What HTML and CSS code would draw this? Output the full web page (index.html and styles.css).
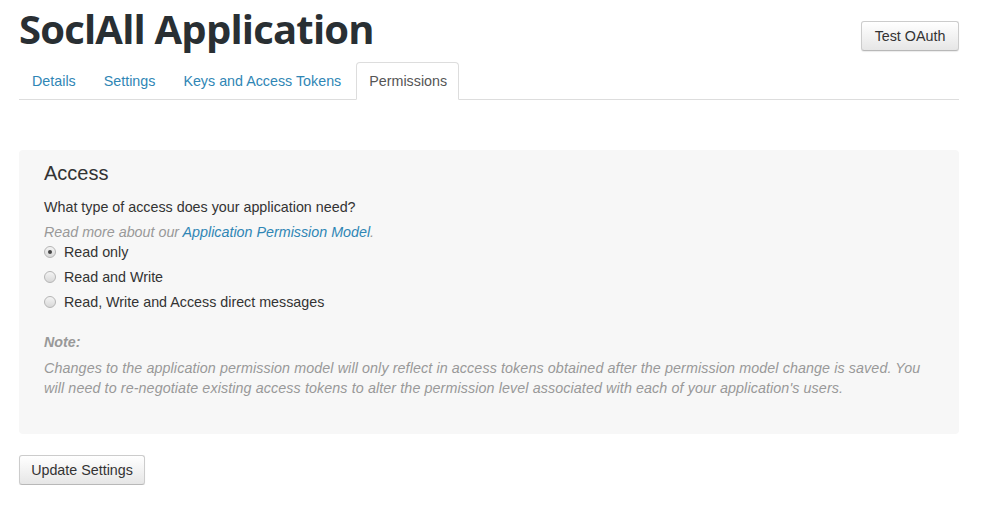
FILE: index.html
```html
<!DOCTYPE html>
<html>
<head>
<meta charset="utf-8">
<link rel="stylesheet" href="styles.css">
</head>
<body>
<div class="page">
  <div class="header">
    <h1 class="title">SoclAll Application</h1>
    <button class="btn btn-oauth">Test OAuth</button>
  </div>
  <ul class="tabs">
    <li class="tab"><a href="#">Details</a></li>
    <li class="tab"><a href="#">Settings</a></li>
    <li class="tab"><a href="#">Keys and Access Tokens</a></li>
    <li class="tab active"><a href="#">Permissions</a></li>
  </ul>
  <div class="panel">
    <h2 class="panel-title">Access</h2>
    <p class="question">What type of access does your application need?</p>
    <p class="more">Read more about our <a href="#">Application Permission Model</a>.</p>
    <label class="radio first"><span class="dot checked"></span>Read only</label>
    <label class="radio"><span class="dot"></span>Read and Write</label>
    <label class="radio"><span class="dot"></span>Read, Write and Access direct messages</label>
    <p class="note-title">Note:</p>
    <p class="note">Changes to the application permission model will only reflect in access tokens obtained after the permission model change is saved. You will need to re-negotiate existing access tokens to alter the permission level associated with each of your application's users.</p>
  </div>
  <button class="btn btn-update">Update Settings</button>
</div>
</body>
</html>
```
FILE: styles.css
```css
* { box-sizing: border-box; }
html, body { margin: 0; padding: 0; background: #fff; }
body { font-family: "Liberation Sans", Arial, sans-serif; font-size: 14.3px; color: #333; }
.page { width: 940px; margin-left: 19px; }
.header { display: flex; justify-content: space-between; align-items: flex-start; height: 62px; }
.title {
  margin: 0; padding-top: 4px;
  font-family: "Open Sans", sans-serif; font-weight: 700; font-size: 40px;
  line-height: 50px; color: #292f33; letter-spacing: -0.8px;
}
.btn {
  font-family: "Liberation Sans", Arial, sans-serif; font-size: 14.3px; color: #333;
  background: linear-gradient(#ffffff, #e6e6e6);
  border: 1px solid #ccc; border-bottom-color: #b8b8b8; border-radius: 3px;
  box-shadow: 0 1px 1px rgba(0,0,0,0.08);
  height: 30px; padding: 0 10px; line-height: 28px; cursor: pointer;
}
.btn-oauth { margin-top: 21px; width: 98px; }
.tabs {
  display: flex; list-style: none; margin: 0; padding: 0;
  border-bottom: 1px solid #ddd; height: 38px;
}
.tab { margin-right: 2px; }
.tab a {
  display: block; padding: 8px 13px; line-height: 20px; height: 38px;
  color: #2f86b5; text-decoration: none; border: 1px solid transparent; border-radius: 4px 4px 0 0;
  border-left: 0; border-right: 0;
}
.tab.active a {
  color: #555; background: #fff; border: 1px solid #ddd; border-bottom-color: #fff;
  padding-left: 12px; padding-right: 11px;
}
.panel {
  margin-top: 50px; background: #f7f7f7; border-radius: 4px;
  padding: 10px 25px 36px; height: 284px;
}
.panel-title { margin: 0 0 11px; font-size: 20px; font-weight: normal; line-height: 26px; color: #333; }
.question { margin: 0; line-height: 20px; }
.more { margin: 5px 0 0; line-height: 20px; font-style: italic; color: #999; }
.more a { color: #2f86b5; text-decoration: none; }
.radio { display: flex; align-items: center; line-height: 20px; margin-top: 5px; }
.radio.first { margin-top: 0; }
.dot {
  width: 12px; height: 12px; border-radius: 50%; margin-right: 8px;
  border: 1px solid #b5b5b5; background: linear-gradient(#f4f4f4, #d8d8d8);
  position: relative; flex: none;
}
.dot.checked::after {
  content: ""; position: absolute; left: 3px; top: 3px; width: 4px; height: 4px;
  border-radius: 50%; background: #444;
}
.note-title { margin: 20px 0 0; font-style: italic; font-weight: bold; color: #999; line-height: 20px; }
.note { margin: 6px 0 0; font-style: italic; color: #999; line-height: 20px; letter-spacing: 0.1px; }
.btn-update { margin-top: 21px; width: 126px; }
```
